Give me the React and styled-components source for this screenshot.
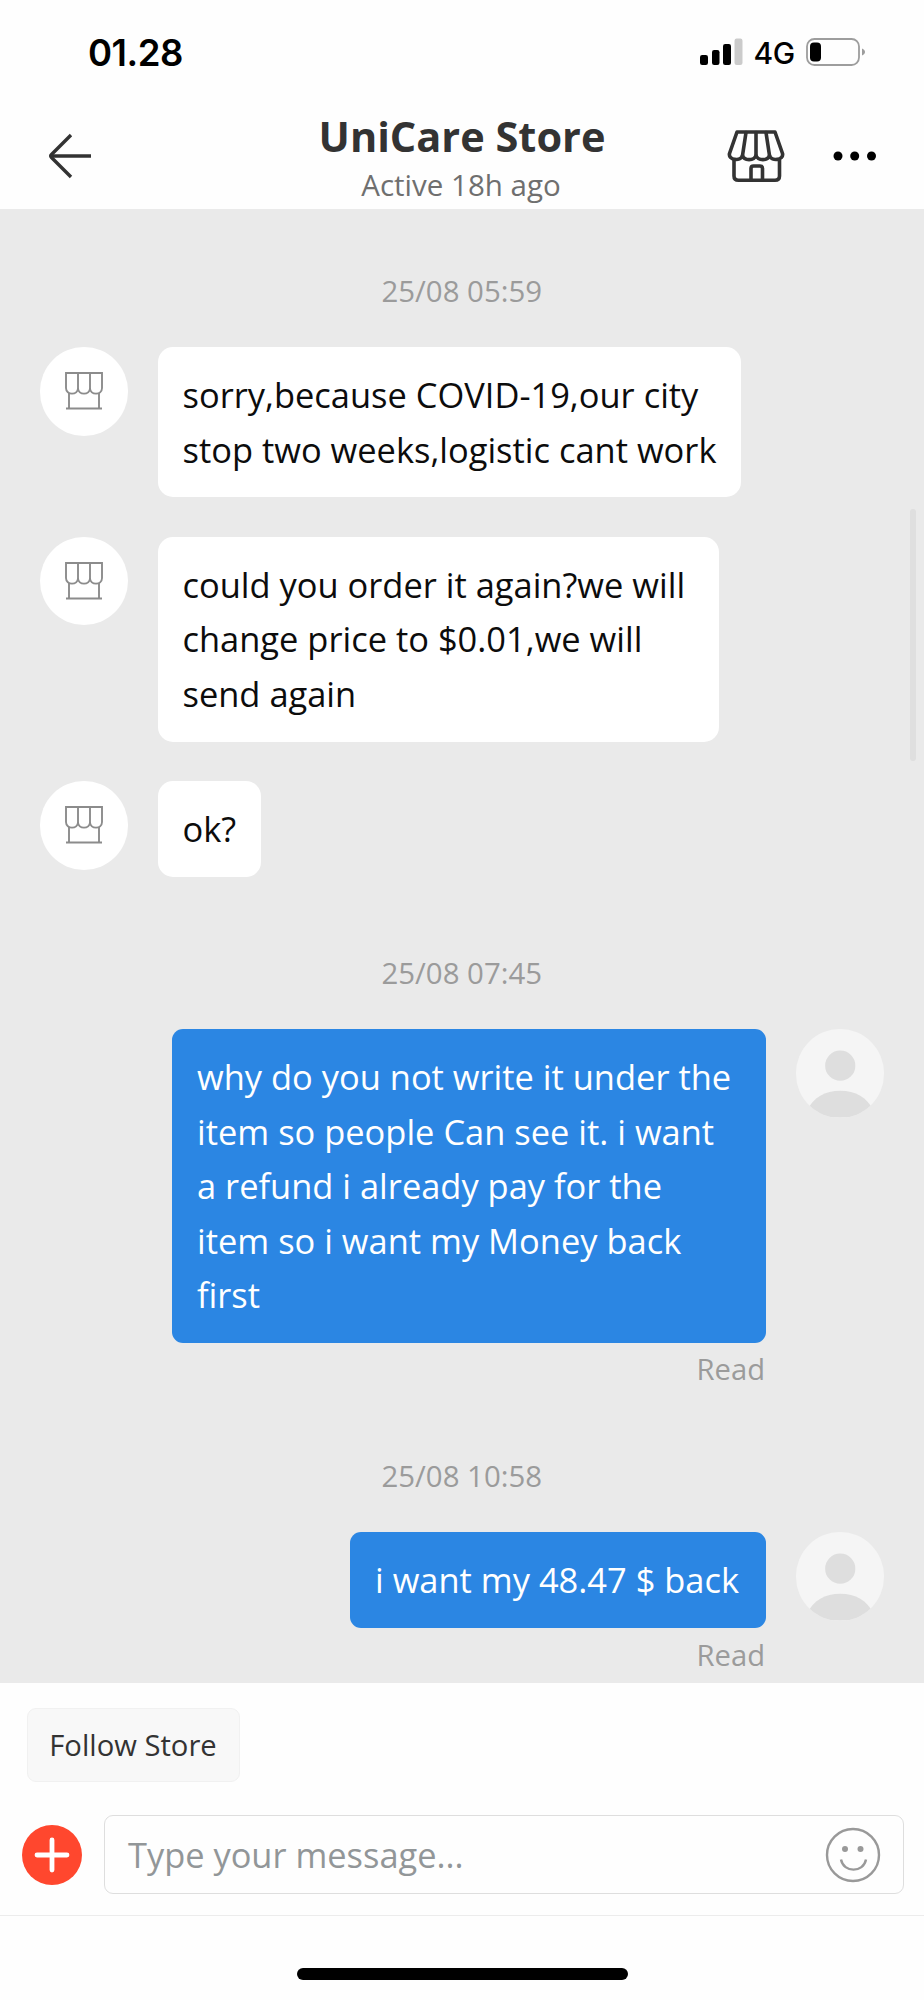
import React from "react";
import styled, { createGlobalStyle } from "styled-components";

const GlobalStyle = createGlobalStyle`
  * { box-sizing: border-box; }
  body { margin: 0; background: #fff; font-family: "Open Sans", "Noto Sans", sans-serif; }
`;

const Screen = styled.main`
  width: 924px;
  height: 2000px;
  display: flex;
  flex-direction: column;
  background: #fefefe;
  overflow: hidden;
`;

const StatusBar = styled.div`
  height: 104px;
  flex: none;
  display: flex;
  align-items: center;
  justify-content: space-between;
  padding: 0 58px 0 88px;
  font-family: Inter, sans-serif;
  color: #000;
`;

const Clock = styled.span`
  padding-top: 2px;
  font-size: 36.5px;
  font-weight: 600;
  letter-spacing: -0.5px;
`;

const Indicators = styled.div`
  display: flex;
  align-items: center;
`;

const Network = styled.span`
  font-size: 30px;
  font-weight: 500;
  line-height: 36px;
  letter-spacing: -0.3px;
  margin: 2px 11px 0 10px;
`;

const NavBar = styled.header`
  height: 105px;
  flex: none;
  display: grid;
  grid-template-columns: 250px 1fr 250px;
  align-items: center;
`;

const NavStart = styled.div`
  display: flex;
  padding: 0 0 2px 48px;
`;

const NavEnd = styled.div`
  display: flex;
  align-items: center;
  padding: 0 0 2px 53px;
  gap: 48px;
`;

const Heading = styled.div`
  text-align: center;
  white-space: nowrap;
  color: #333;
`;

const StoreName = styled.h1`
  margin: -1px 0 0;
  font-size: 41.5px;
  line-height: 56px;
  font-weight: 700;
`;

const LastActive = styled.p`
  margin: 0;
  padding-right: 2px;
  font-size: 29.5px;
  line-height: 41px;
  color: #6f6f6f;
`;

const Chat = styled.section`
  position: relative;
  height: 1474px;
  flex: none;
  display: flex;
  flex-direction: column;
  padding: 62px 40px 0 39.5px;
  background: #eaeaea;
  overflow: hidden;
`;

const ScrollThumb = styled.div`
  position: absolute;
  right: 8px;
  top: 300px;
  width: 6.5px;
  height: 252px;
  border-radius: 4px;
  background: #dfdfdf;
`;

const Stamp = styled.time`
  text-align: center;
  font-size: 29.4px;
  line-height: 40px;
  margin-bottom: 36px;
  color: #9b9b9b;
`;

const Message = styled.div`
  display: flex;
  flex-direction: ${(p) => (p.$own ? "row-reverse" : "row")};
  align-items: flex-start;
  gap: 29.5px;
  margin-bottom: ${(p) => p.$after}px;
`;

const Avatar = styled.div`
  width: 88.5px;
  height: 88.5px;
  flex: none;
  border-radius: 50%;
  overflow: hidden;
  display: flex;
  align-items: center;
  justify-content: center;
  background: ${(p) => (p.$own ? "#f5f5f5" : "#fff")};
`;

const Content = styled.div`
  display: flex;
  flex-direction: column;
  align-items: flex-end;
`;

const Bubble = styled.div`
  padding: 21.2px 25px 20.4px;
  border-radius: ${(p) => (p.$own ? 11 : 15)}px;
  font-size: 34.45px;
  line-height: 54.4px;
  white-space: nowrap;
  width: ${(p) => p.$width}px;
  background: ${(p) => (p.$own ? "#2b86e3" : "#fff")};
  color: ${(p) => (p.$own ? "#fff" : "#0c0c0c")};
`;

const Receipt = styled.span`
  margin-top: 6.5px;
  font-size: 29.2px;
  line-height: 40px;
  color: #9b9b9b;
  padding-right: 1px;
`;

const Footer = styled.footer`
  flex: 1;
  display: flex;
  flex-direction: column;
  background: #fefefe;
`;

const QuickReplies = styled.div`
  display: flex;
  padding: 25px 27px 33px;
`;

const Chip = styled.button`
  width: 213px;
  height: 74px;
  padding: 0 1px 0 0;
  border: 1px solid #f1f1f1;
  border-radius: 9px;
  background: #f8f8f8;
  font: 400 29.2px/40px "Open Sans", sans-serif;
  color: #333;
`;

const Composer = styled.div`
  display: flex;
  align-items: center;
  gap: 22px;
  height: 101px;
  padding: 0 20px 21px 22px;
  border-bottom: 1px solid #ececec;
`;

const AddButton = styled.button`
  width: 60px;
  height: 60px;
  flex: none;
  padding: 0;
  border: 0;
  border-radius: 50%;
  background: #ff472e;
  display: flex;
  align-items: center;
  justify-content: center;
`;

const Field = styled.div`
  flex: 1;
  height: 79px;
  display: flex;
  align-items: center;
  justify-content: space-between;
  padding: 0 22.5px 0 23px;
  border: 1px solid #dedede;
  border-radius: 9px;
  font-size: 34.4px;
  color: #929698;
`;

const HomeIndicator = styled.div`
  width: 331px;
  height: 12px;
  margin: 52px 0 0 297px;
  border-radius: 6px;
  background: #000;
`;

const SignalIcon = () => (
  <svg width="43" height="28" viewBox="0 0 43 28">
    <rect x="0" y="17" width="8" height="10" rx="2.2" />
    <rect x="12" y="12" width="7.5" height="15" rx="2.2" />
    <rect x="23" y="6" width="8" height="21" rx="2.2" />
    <rect x="34.5" y="0.5" width="8" height="26.5" rx="2.2" fill="#cbcbcb" />
  </svg>
);

const BatteryIcon = () => (
  <svg width="60" height="28" viewBox="0 0 60 28">
    <rect x="1" y="1" width="52" height="26" rx="7.5" fill="none" stroke="#9d9d9d" strokeWidth="1.8" />
    <rect x="4" y="4.5" width="11" height="19" rx="4" />
    <path d="M56 10.5c4 1.5 4 5.5 0 7z" fill="#9d9d9d" />
  </svg>
);

const BackIcon = () => (
  <svg width="44" height="46" viewBox="0 0 44 46" fill="none" stroke="#333" strokeWidth="3.4">
    <path d="M43 23H3" />
    <path d="M23 2 3.5 21.5Q2 23 3.5 24.5L23 44" />
  </svg>
);

const StorefrontIcon = () => (
  <svg width="58" height="52" viewBox="0 0 58 52" fill="none" stroke="#333" strokeWidth="3.6" strokeLinejoin="round" strokeLinecap="round">
    <path d="M10 2H48L55.5 23.5C57 30 44.5 32 42.5 25.5C41 31 31 31 29 25.5C27 31 17 31 15.5 25.5C13.5 32 1 30 2.5 23.5Z" />
    <path d="M19 2.5 15.5 25.5M29 2.5V25.5M39 2.5 42.5 25.5" />
    <path d="M7 30V46Q7 50.2 11.5 50.2H48Q52.5 50.2 52.5 46V30" />
    <path d="M24 50V38.5Q24 36 26.5 36H33Q35.5 36 35.5 38.5V50" />
  </svg>
);

const MoreIcon = () => (
  <svg width="44" height="10" viewBox="0 0 44 10">
    <circle cx="5" cy="5" r="4.5" />
    <circle cx="21.7" cy="5" r="4.5" />
    <circle cx="38.5" cy="5" r="4.5" />
  </svg>
);

const ShopIcon = () => (
  <svg width="38" height="38" viewBox="0 0 38 38" fill="none" stroke="#8c8c8c" strokeWidth="1.9">
    <path d="M1 1H37V16C37 23.5 25 23.5 25 16C25 23.5 13 23.5 13 16C13 23.5 1 23.5 1 16Z" />
    <path d="M13 1V17M25 1V17M4 21V36M34 21V36M1 36.5H37" />
  </svg>
);

const PersonIcon = () => (
  <svg width="88.5" height="88.5" viewBox="0 0 88 88" fill="#dedede">
    <circle cx="44" cy="36.5" r="15" />
    <path d="M11 88V81C17 68 29 61.3 44 61.3S71 68 77 81V88Z" />
  </svg>
);

const PlusIcon = () => (
  <svg width="36" height="36" viewBox="0 0 36 36" stroke="#fff" strokeWidth="4.8" strokeLinecap="round">
    <path d="M18 3V33M3 18H33" />
  </svg>
);

const SmileIcon = () => (
  <svg width="56" height="56" viewBox="0 0 56 56" fill="none" stroke="#999" strokeWidth="2.4">
    <circle cx="28" cy="28" r="26" />
    <circle cx="20" cy="22" r="3" fill="#999" stroke="none" />
    <circle cx="35.5" cy="22" r="3" fill="#999" stroke="none" />
    <path d="M16 32.5C18.5 46 38.5 46 41 32.5" />
  </svg>
);

const thread = [
  {
    time: "25/08 05:59",
    messages: [
      { lines: ["sorry,because COVID-19,our city", "stop two weeks,logistic cant work"], width: 583.5, after: 39.5 },
      { lines: ["could you order it again?we will", "change price to $0.01,we will", "send again"], width: 561.5, after: 39.5 },
      { lines: ["ok?"], width: 103.5, after: 76 },
    ],
  },
  {
    time: "25/08 07:45",
    messages: [
      {
        own: true,
        lines: [
          "why do you not write it under the",
          "item so people Can see it. i want",
          "a refund i already pay for the",
          "item so i want my Money back",
          "first",
        ],
        width: 594,
        after: 67,
      },
    ],
  },
  {
    time: "25/08 10:58",
    messages: [{ own: true, lines: ["i want my 48.47 $ back"], width: 416, after: 0 }],
  },
];

export default function App() {
  return (
    <Screen>
      <GlobalStyle />
      <StatusBar>
        <Clock>01.28</Clock>
        <Indicators>
          <SignalIcon />
          <Network>4G</Network>
          <BatteryIcon />
        </Indicators>
      </StatusBar>
      <NavBar>
        <NavStart>
          <BackIcon />
        </NavStart>
        <Heading>
          <StoreName>UniCare Store</StoreName>
          <LastActive>Active 18h ago</LastActive>
        </Heading>
        <NavEnd>
          <StorefrontIcon />
          <MoreIcon />
        </NavEnd>
      </NavBar>
      <Chat>
        {thread.map((group) => (
          <React.Fragment key={group.time}>
            <Stamp>{group.time}</Stamp>
            {group.messages.map((m) => (
              <Message key={m.lines[0]} $own={m.own} $after={m.after}>
                <Avatar $own={m.own}>{m.own ? <PersonIcon /> : <ShopIcon />}</Avatar>
                <Content>
                  <Bubble $own={m.own} $width={m.width}>
                    {m.lines.map((line) => (
                      <div key={line}>{line}</div>
                    ))}
                  </Bubble>
                  {m.own && <Receipt>Read</Receipt>}
                </Content>
              </Message>
            ))}
          </React.Fragment>
        ))}
        <ScrollThumb />
      </Chat>
      <Footer>
        <QuickReplies>
          <Chip>Follow Store</Chip>
        </QuickReplies>
        <Composer>
          <AddButton aria-label="Add">
            <PlusIcon />
          </AddButton>
          <Field>
            <span>Type your message...</span>
            <SmileIcon />
          </Field>
        </Composer>
        <HomeIndicator />
      </Footer>
    </Screen>
  );
}
